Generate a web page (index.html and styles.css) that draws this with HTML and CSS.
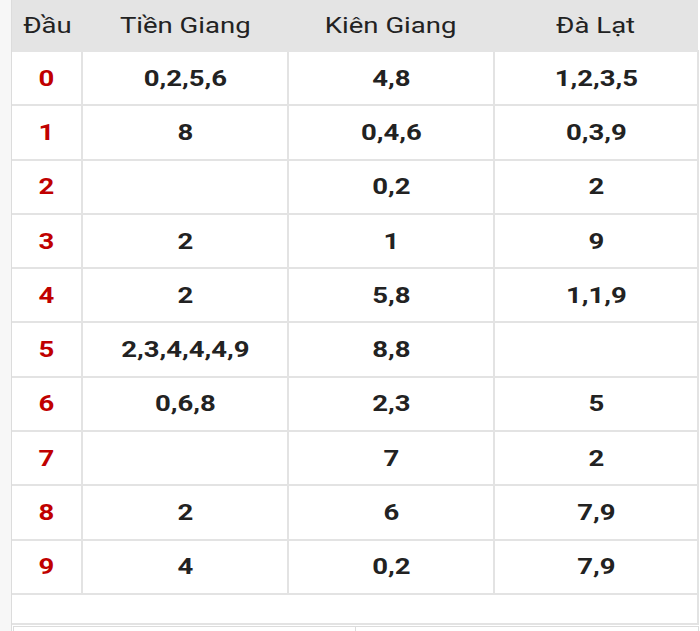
FILE: index.html
```html
<!DOCTYPE html>
<html lang="vi">
<head>
<meta charset="utf-8">
<link rel="stylesheet" href="styles.css">
</head>
<body>
<div class="wrap">
  <div class="panel">
    <table class="loto">
      <thead>
        <tr>
          <th class="c1"><span class="sx">Đầu</span></th>
          <th><span class="sx">Tiền Giang</span></th>
          <th><span class="sx">Kiên Giang</span></th>
          <th><span class="sx">Đà Lạt</span></th>
        </tr>
      </thead>
      <tbody>
        <tr><td class="dau"><span class="sx">0</span></td><td><span class="sx">0,2,5,6</span></td><td><span class="sx">4,8</span></td><td><span class="sx">1,2,3,5</span></td></tr>
        <tr><td class="dau"><span class="sx">1</span></td><td><span class="sx">8</span></td><td><span class="sx">0,4,6</span></td><td><span class="sx">0,3,9</span></td></tr>
        <tr><td class="dau"><span class="sx">2</span></td><td></td><td><span class="sx">0,2</span></td><td><span class="sx">2</span></td></tr>
        <tr><td class="dau"><span class="sx">3</span></td><td><span class="sx">2</span></td><td><span class="sx">1</span></td><td><span class="sx">9</span></td></tr>
        <tr><td class="dau"><span class="sx">4</span></td><td><span class="sx">2</span></td><td><span class="sx">5,8</span></td><td><span class="sx">1,1,9</span></td></tr>
        <tr><td class="dau"><span class="sx">5</span></td><td><span class="sx">2,3,4,4,4,9</span></td><td><span class="sx">8,8</span></td><td></td></tr>
        <tr><td class="dau"><span class="sx">6</span></td><td><span class="sx">0,6,8</span></td><td><span class="sx">2,3</span></td><td><span class="sx">5</span></td></tr>
        <tr><td class="dau"><span class="sx">7</span></td><td></td><td><span class="sx">7</span></td><td><span class="sx">2</span></td></tr>
        <tr><td class="dau"><span class="sx">8</span></td><td><span class="sx">2</span></td><td><span class="sx">6</span></td><td><span class="sx">7,9</span></td></tr>
        <tr><td class="dau"><span class="sx">9</span></td><td><span class="sx">4</span></td><td><span class="sx">0,2</span></td><td><span class="sx">7,9</span></td></tr>
        <tr class="empty"><td colspan="4"></td></tr>
      </tbody>
    </table>
    <div class="next">
      <div class="next-cell"></div>
      <div class="next-cell"></div>
    </div>
  </div>
</div>
</body>
</html>
```
FILE: styles.css
```css
html, body {
  margin: 0;
  padding: 0;
  background: #ffffff;
}
body {
  font-family: Roboto, "Liberation Sans", Arial, sans-serif;
  color: #222222;
}
.wrap {
  background: #f7f7f7;
  padding-left: 11px;
  min-height: 631px;
}
.panel {
  background: #ffffff;
  border-left: 1px solid #dcdcdc;
  width: 688px;
  min-height: 631px;
}
.loto {
  border-collapse: collapse;
  width: 687px;
  table-layout: fixed;
}
.loto th {
  background: #e4e4e4;
  font-weight: 400;
  font-size: 22px;
  height: 50px;
  padding: 0;
  text-align: center;
  color: #222222;
  border-bottom: 2px solid #e4e4e4;
}
.loto th.c1 { width: 70px; }
.loto th:nth-child(2) { width: 206px; }
.loto th:nth-child(3) { width: 206px; }
.loto td {
  border: 2px solid #e3e3e3;
  height: 52.3px;
  padding: 0;
  text-align: center;
  font-size: 22px;
  font-weight: 700;
  color: #222222;
}
.loto td:first-child { border-left: none; }
.loto td.dau { color: #c00000; }
.loto tr.empty td {
  height: 28px;
  border-left: none;
}
.sx {
  display: inline-block;
  transform: scaleX(1.25);
}
.next {
  margin-top: 1px;
  margin-left: 1px;
  display: grid;
  grid-template-columns: 341px 1fr;
  border: 1px solid #dcdcdc;
  border-bottom: none;
  height: 10px;
  width: 684px;
}
.next-cell + .next-cell {
  border-left: 1px solid #dcdcdc;
}
```
